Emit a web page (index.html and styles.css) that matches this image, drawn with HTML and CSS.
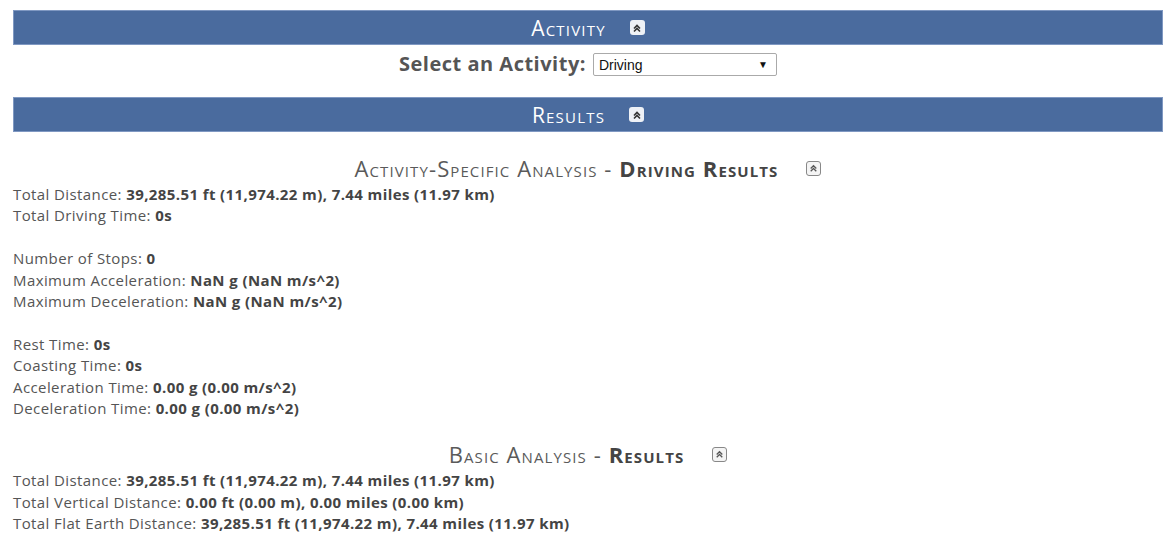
FILE: index.html
```html
<!DOCTYPE html>
<html>
<head>
<meta charset="utf-8">
<link rel="stylesheet" href="styles.css">
</head>
<body>
<div class="page">
  <div class="bar">
    <span class="bar-title">Activity</span>
    <span class="toggle toggle-bar"><svg viewBox="0 0 14 14" width="14" height="14"><path d="M4 7.5 L7 4.5 L10 7.5 M4 10.5 L7 7.5 L10 10.5" fill="none" stroke="#333" stroke-width="1.6"/></svg></span>
  </div>
  <div class="select-row">
    <label class="select-label">Select an Activity:</label>
    <div class="select-box"><span>Driving</span><span class="arrow">▼</span></div>
  </div>
  <div class="bar bar2">
    <span class="bar-title">Results</span>
    <span class="toggle toggle-bar"><svg viewBox="0 0 14 14" width="14" height="14"><path d="M4 7.5 L7 4.5 L10 7.5 M4 10.5 L7 7.5 L10 10.5" fill="none" stroke="#333" stroke-width="1.6"/></svg></span>
  </div>

  <div class="sec-head">
    <span class="sec-title">Activity-Specific Analysis - <b>Driving Results</b></span>
    <span class="toggle toggle-sec"><svg viewBox="0 0 14 14" width="14" height="14"><path d="M4 7.5 L7 4.5 L10 7.5 M4 10.5 L7 7.5 L10 10.5" fill="none" stroke="#555" stroke-width="1.4"/></svg></span>
  </div>
  <div class="lines">
    <div>Total Distance: <b>39,285.51 ft (11,974.22 m), 7.44 miles (11.97 km)</b></div>
    <div>Total Driving Time: <b>0s</b></div>
    <div class="gap">Number of Stops: <b>0</b></div>
    <div>Maximum Acceleration: <b>NaN g (NaN m/s^2)</b></div>
    <div>Maximum Deceleration: <b>NaN g (NaN m/s^2)</b></div>
    <div class="gap">Rest Time: <b>0s</b></div>
    <div>Coasting Time: <b>0s</b></div>
    <div>Acceleration Time: <b>0.00 g (0.00 m/s^2)</b></div>
    <div>Deceleration Time: <b>0.00 g (0.00 m/s^2)</b></div>
  </div>

  <div class="sec-head sec-head2">
    <span class="sec-title">Basic Analysis - <b>Results</b></span>
    <span class="toggle toggle-sec"><svg viewBox="0 0 14 14" width="14" height="14"><path d="M4 7.5 L7 4.5 L10 7.5 M4 10.5 L7 7.5 L10 10.5" fill="none" stroke="#555" stroke-width="1.4"/></svg></span>
  </div>
  <div class="lines">
    <div>Total Distance: <b>39,285.51 ft (11,974.22 m), 7.44 miles (11.97 km)</b></div>
    <div>Total Vertical Distance: <b>0.00 ft (0.00 m), 0.00 miles (0.00 km)</b></div>
    <div>Total Flat Earth Distance: <b>39,285.51 ft (11,974.22 m), 7.44 miles (11.97 km)</b></div>
  </div>
</div>
</body>
</html>
```
FILE: styles.css
```css
html, body {
  margin: 0;
  padding: 0;
  background: #fff;
}
body {
  font-family: "Open Sans", "Noto Sans", sans-serif;
  color: #555;
}
.page {
  padding: 10px 12px 0 13px;
}
.bar {
  height: 35px;
  box-sizing: border-box;
  background: #4a6b9e;
  border: 1px solid #7f98c2;
  display: flex;
  align-items: center;
  justify-content: center;
  gap: 24px;
  color: #fff;
}
.bar-title {
  font-size: 21px;
  letter-spacing: 1.2px;
  font-variant: small-caps;
  line-height: 1;
  padding-top: 1px;
}
.toggle {
  display: inline-flex;
  width: 15px;
  height: 15px;
  border-radius: 3px;
  box-sizing: border-box;
  align-items: center;
  justify-content: center;
}
.toggle svg { display: block; }
.toggle-bar {
  background: #eef1f6;
}
.toggle-sec {
  border: 1px solid #888;
  background: #f4f4f4;
}
.select-row {
  height: 52px;
  display: flex;
  justify-content: center;
  align-items: flex-start;
  gap: 7px;
  padding-top: 6px;
  box-sizing: border-box;
}
.select-label {
  font-size: 20px;
  letter-spacing: 0.5px;
  font-weight: bold;
  color: #555;
  line-height: 26px;
}
.select-box {
  width: 184px;
  height: 23px;
  box-sizing: border-box;
  border: 1px solid #aaa;
  border-radius: 2px;
  margin-top: 2px;
  display: flex;
  align-items: center;
  justify-content: space-between;
  padding: 0 8px 0 5px;
  font-family: "Liberation Sans", Arial, sans-serif;
  font-size: 14px;
  color: #111;
}
.select-box .arrow {
  font-size: 10px;
  color: #111;
}
.sec-head {
  margin-top: 22px;
  margin-bottom: 2px;
  display: flex;
  justify-content: center;
  align-items: center;
  gap: 28px;
  height: 28px;
}
.sec-head2 { margin-top: 21px; }
.sec-title {
  font-size: 22px;
  letter-spacing: 1.1px;
  font-variant: small-caps;
  color: #5a5a5a;
}
.sec-title b {
  color: #444;
}
.lines {
  font-size: 15px;
  letter-spacing: 0.4px;
  line-height: 21.4px;
  color: #555;
}
.lines b {
  color: #444;
}
.gap {
  margin-top: 21.4px;
}
```
